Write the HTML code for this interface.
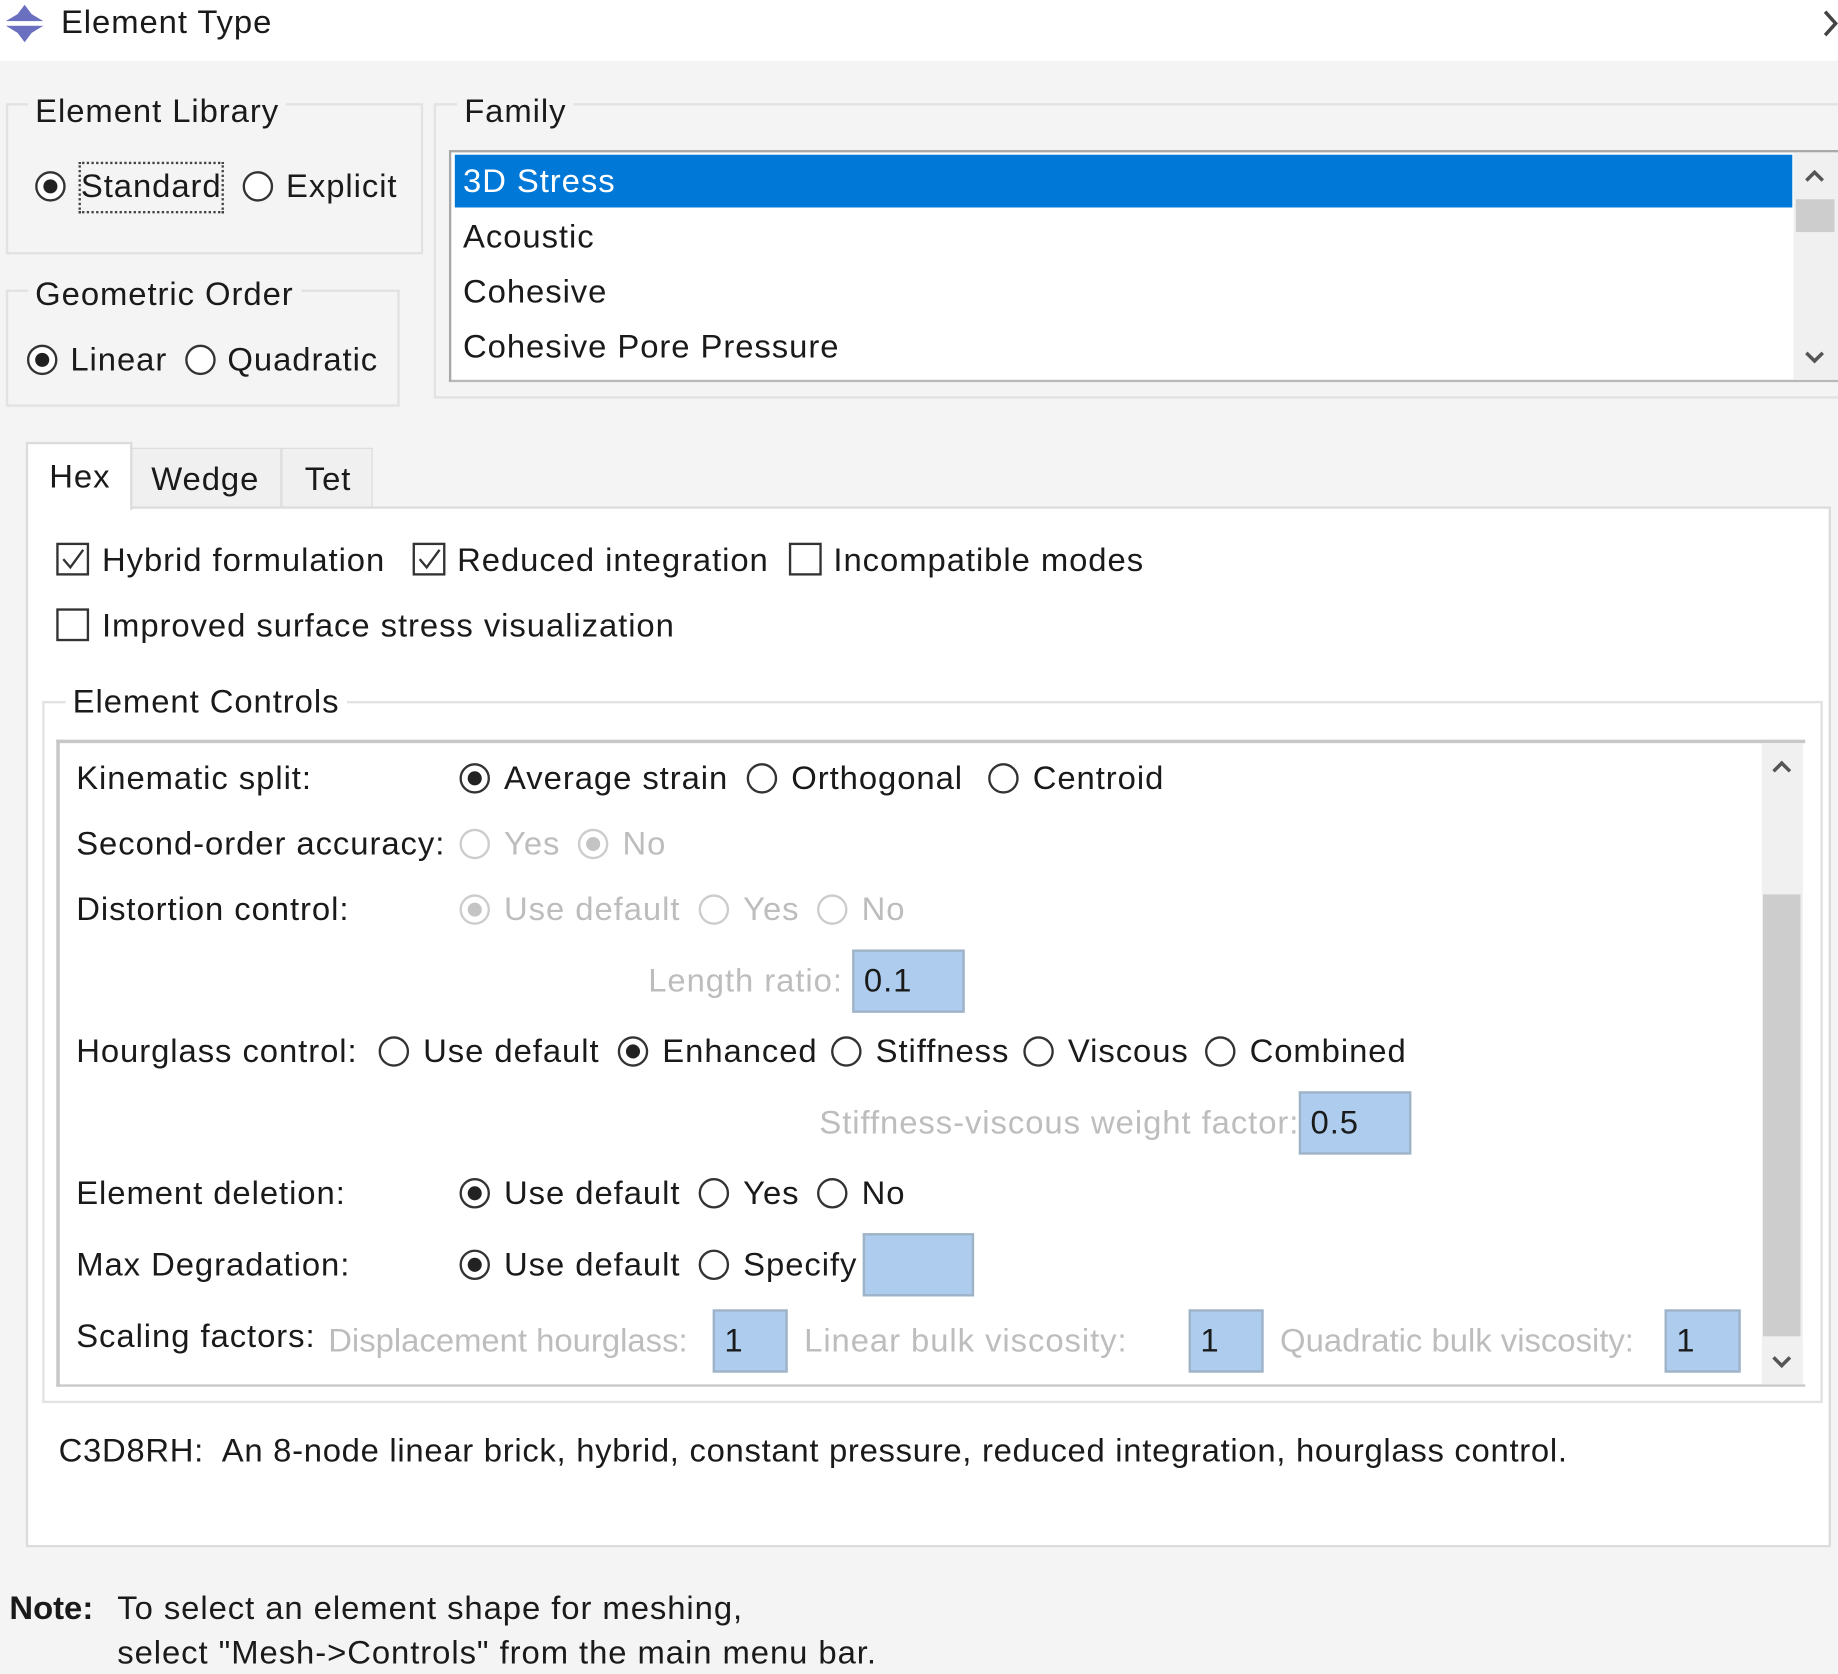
<!DOCTYPE html>
<html><head><meta charset="utf-8"><style>
html,body{margin:0;padding:0;width:1838px;height:1674px;overflow:hidden;background:#f4f4f4}
#s{position:absolute;left:0;top:0;width:1568px;height:1428px;transform:scale(1.1722);transform-origin:0 0;font-family:"Liberation Sans",sans-serif;font-size:28px;letter-spacing:0.8px;color:#1a1a1a;background:#f4f4f4}
.a{position:absolute}
.t{position:absolute;white-space:nowrap;height:34px;line-height:34px}
.d{color:#bdbdbd}
.r{position:absolute;width:22px;height:22px;border:2px solid #333;border-radius:50%;background:#fff}
.r.on::after{content:"";position:absolute;left:5px;top:5px;width:12px;height:12px;border-radius:50%;background:#222}
.r.dis{border-color:#ccc}
.r.dis.on::after{background:#c4c4c4}
.c{position:absolute;width:24px;height:24px;border:2px solid #333;background:#fff}
.g{position:absolute;border:2px solid #e2e2e2}
.f{position:absolute;background:#aecdee;border:2px solid #9fb3c6;box-sizing:border-box;padding-left:8px;line-height:50px}
</style></head><body><div id="s">
<div class="a" style="left:0;top:0;width:1568px;height:52px;background:#fff"></div>
<svg class="a" style="left:4px;top:3px" width="34" height="34" viewBox="0 0 34 34"><path d="M17 1 L23 9 L33 15 L33 19 L23 25 L17 33 L11 25 L1 19 L1 15 L11 9 Z" fill="#6a6fc0"/><rect x="0" y="15" width="34" height="4" fill="#fff"/></svg>
<div class="t" style="left:52px;top:2px">Element Type</div>
<svg class="a" style="left:1555px;top:8px" width="14" height="24"><path d="M2 2 L11 12 L2 22" stroke="#444" stroke-width="3" fill="none"/></svg>

<div class="g" style="left:5px;top:88px;width:352px;height:125px"></div>
<div class="t" style="left:24px;top:78px;background:#f4f4f4;padding:0 6px">Element Library</div>
<div class="r on" style="left:30px;top:146px"></div>
<div class="a" style="left:67px;top:138px;width:120px;height:40px;border:2px dotted #444"></div>
<div class="t" style="left:69px;top:142px">Standard</div>
<div class="r" style="left:207px;top:146px"></div>
<div class="t" style="left:244px;top:142px">Explicit</div>

<div class="g" style="left:5px;top:247px;width:332px;height:96px"></div>
<div class="t" style="left:24px;top:234px;background:#f4f4f4;padding:0 6px">Geometric Order</div>
<div class="r on" style="left:23px;top:294px"></div>
<div class="t" style="left:60px;top:290px">Linear</div>
<div class="r" style="left:158px;top:294px"></div>
<div class="t" style="left:194px;top:290px">Quadratic</div>

<div class="g" style="left:370px;top:88px;width:1200px;height:248px"></div>
<div class="t" style="left:390px;top:78px;background:#f4f4f4;padding:0 6px">Family</div>
<div class="a" style="left:383px;top:128px;width:1185px;height:198px;background:#fff;border-top:2px solid #a8a8a8;border-left:2px solid #a8a8a8;border-bottom:2px solid #b8b8b8;box-sizing:border-box"></div>
<div class="a" style="left:388px;top:132px;width:1141px;height:45px;background:#0078d7"></div>
<div class="t" style="left:395px;top:138px;color:#fff">3D Stress</div>
<div class="t" style="left:395px;top:185px">Acoustic</div>
<div class="t" style="left:395px;top:232px">Cohesive</div>
<div class="t" style="left:395px;top:279px">Cohesive Pore Pressure</div>
<div class="a" style="left:1530px;top:130px;width:38px;height:194px;background:#f0f0f0"></div>
<div class="a" style="left:1532px;top:170px;width:33px;height:28px;background:#cdcdcd"></div>
<svg class="a" style="left:1538px;top:143px" width="20" height="14"><path d="M3 11 L10 4 L17 11" stroke="#555" stroke-width="3" fill="none"/></svg>
<svg class="a" style="left:1538px;top:298px" width="20" height="14"><path d="M3 3 L10 10 L17 3" stroke="#555" stroke-width="3" fill="none"/></svg>

<div class="a" style="left:22px;top:432px;width:1540px;height:888px;background:#fff;border:2px solid #dcdcdc;box-sizing:border-box"></div>
<div class="a" style="left:112px;top:382px;width:128px;height:51px;background:#f0f0f0;border:1px solid #dcdcdc;box-sizing:border-box"></div>
<div class="a" style="left:240px;top:382px;width:78px;height:51px;background:#f0f0f0;border:1px solid #dcdcdc;box-sizing:border-box"></div>
<div class="a" style="left:22px;top:377px;width:91px;height:58px;background:#fff;border:2px solid #dcdcdc;border-bottom:none;box-sizing:border-box"></div>
<div class="t" style="left:42px;top:390px">Hex</div>
<div class="t" style="left:129px;top:392px">Wedge</div>
<div class="t" style="left:260px;top:392px">Tet</div>

<div class="c" style="left:48px;top:463px"></div>
<svg class="a" style="left:50px;top:465px" width="24" height="24"><path d="M4 12 L10 19 L21 4" stroke="#333" stroke-width="2" fill="none"/></svg>
<div class="t" style="left:87px;top:461px">Hybrid formulation</div>
<div class="c" style="left:352px;top:463px"></div>
<svg class="a" style="left:354px;top:465px" width="24" height="24"><path d="M4 12 L10 19 L21 4" stroke="#333" stroke-width="2" fill="none"/></svg>
<div class="t" style="left:390px;top:461px">Reduced integration</div>
<div class="c" style="left:673px;top:463px"></div>
<div class="t" style="left:711px;top:461px">Incompatible modes</div>
<div class="c" style="left:48px;top:519px"></div>
<div class="t" style="left:87px;top:517px">Improved surface stress visualization</div>

<div class="g" style="left:36px;top:598px;width:1515px;height:595px"></div>
<div class="t" style="left:56px;top:582px;background:#fff;padding:0 6px">Element Controls</div>
<div class="a" style="left:48px;top:631px;width:1492px;height:552px;background:#fff;border-top:3px solid #c8c8c8;border-left:3px solid #c8c8c8;border-bottom:2px solid #c8c8c8;box-sizing:border-box"></div>
<div class="a" style="left:1503px;top:634px;width:35px;height:547px;background:#f0f0f0"></div>
<div class="a" style="left:1504px;top:763px;width:32px;height:377px;background:#cdcdcd"></div>
<svg class="a" style="left:1510px;top:647px" width="20" height="14"><path d="M3 11 L10 4 L17 11" stroke="#555" stroke-width="3" fill="none"/></svg>
<svg class="a" style="left:1510px;top:1155px" width="20" height="14"><path d="M3 3 L10 10 L17 3" stroke="#555" stroke-width="3" fill="none"/></svg>

<div class="t" style="left:65px;top:647px">Kinematic split:</div>
<div class="r on" style="left:392px;top:651px"></div><div class="t" style="left:430px;top:647px">Average strain</div>
<div class="r" style="left:637px;top:651px"></div><div class="t" style="left:675px;top:647px">Orthogonal</div>
<div class="r" style="left:843px;top:651px"></div><div class="t" style="left:881px;top:647px">Centroid</div>

<div class="t" style="left:65px;top:703px">Second-order accuracy:</div>
<div class="r dis" style="left:392px;top:707px"></div><div class="t d" style="left:430px;top:703px">Yes</div>
<div class="r dis on" style="left:493px;top:707px"></div><div class="t d" style="left:531px;top:703px">No</div>

<div class="t" style="left:65px;top:759px">Distortion control:</div>
<div class="r dis on" style="left:392px;top:763px"></div><div class="t d" style="left:430px;top:759px">Use default</div>
<div class="r dis" style="left:596px;top:763px"></div><div class="t d" style="left:634px;top:759px">Yes</div>
<div class="r dis" style="left:697px;top:763px"></div><div class="t d" style="left:735px;top:759px">No</div>

<div class="t d" style="left:553px;top:820px">Length ratio:</div>
<div class="f" style="left:727px;top:810px;width:96px;height:54px">0.1</div>

<div class="t" style="left:65px;top:880px">Hourglass control:</div>
<div class="r" style="left:323px;top:884px"></div><div class="t" style="left:361px;top:880px">Use default</div>
<div class="r on" style="left:527px;top:884px"></div><div class="t" style="left:565px;top:880px">Enhanced</div>
<div class="r" style="left:709px;top:884px"></div><div class="t" style="left:747px;top:880px">Stiffness</div>
<div class="r" style="left:873px;top:884px"></div><div class="t" style="left:911px;top:880px">Viscous</div>
<div class="r" style="left:1028px;top:884px"></div><div class="t" style="left:1066px;top:880px">Combined</div>

<div class="t d" style="left:699px;top:941px">Stiffness-viscous weight factor:</div>
<div class="f" style="left:1108px;top:931px;width:96px;height:54px">0.5</div>

<div class="t" style="left:65px;top:1001px">Element deletion:</div>
<div class="r on" style="left:392px;top:1005px"></div><div class="t" style="left:430px;top:1001px">Use default</div>
<div class="r" style="left:596px;top:1005px"></div><div class="t" style="left:634px;top:1001px">Yes</div>
<div class="r" style="left:697px;top:1005px"></div><div class="t" style="left:735px;top:1001px">No</div>

<div class="t" style="left:65px;top:1062px">Max Degradation:</div>
<div class="r on" style="left:392px;top:1066px"></div><div class="t" style="left:430px;top:1062px">Use default</div>
<div class="r" style="left:596px;top:1066px"></div><div class="t" style="left:634px;top:1062px">Specify</div>
<div class="f" style="left:736px;top:1052px;width:95px;height:54px"></div>

<div class="t" style="left:65px;top:1123px">Scaling factors:</div>
<div class="t d" style="left:280px;top:1127px;letter-spacing:0">Displacement hourglass:</div>
<div class="f" style="left:608px;top:1117px;width:64px;height:54px">1</div>
<div class="t d" style="left:686px;top:1127px">Linear bulk viscosity:</div>
<div class="f" style="left:1014px;top:1117px;width:64px;height:54px">1</div>
<div class="t d" style="left:1092px;top:1127px;letter-spacing:0">Quadratic bulk viscosity:</div>
<div class="f" style="left:1420px;top:1117px;width:65px;height:54px">1</div>

<div class="t" style="left:50px;top:1221px;letter-spacing:0.6px">C3D8RH:&nbsp; An 8-node linear brick, hybrid, constant pressure, reduced integration, hourglass control.</div>

<div class="t" style="left:8px;top:1355px;font-weight:bold;letter-spacing:0">Note:</div>
<div class="t" style="left:100px;top:1355px">To select an element shape for meshing,</div>
<div class="t" style="left:100px;top:1393px">select "Mesh-&gt;Controls" from the main menu bar.</div>
</div></body></html>
